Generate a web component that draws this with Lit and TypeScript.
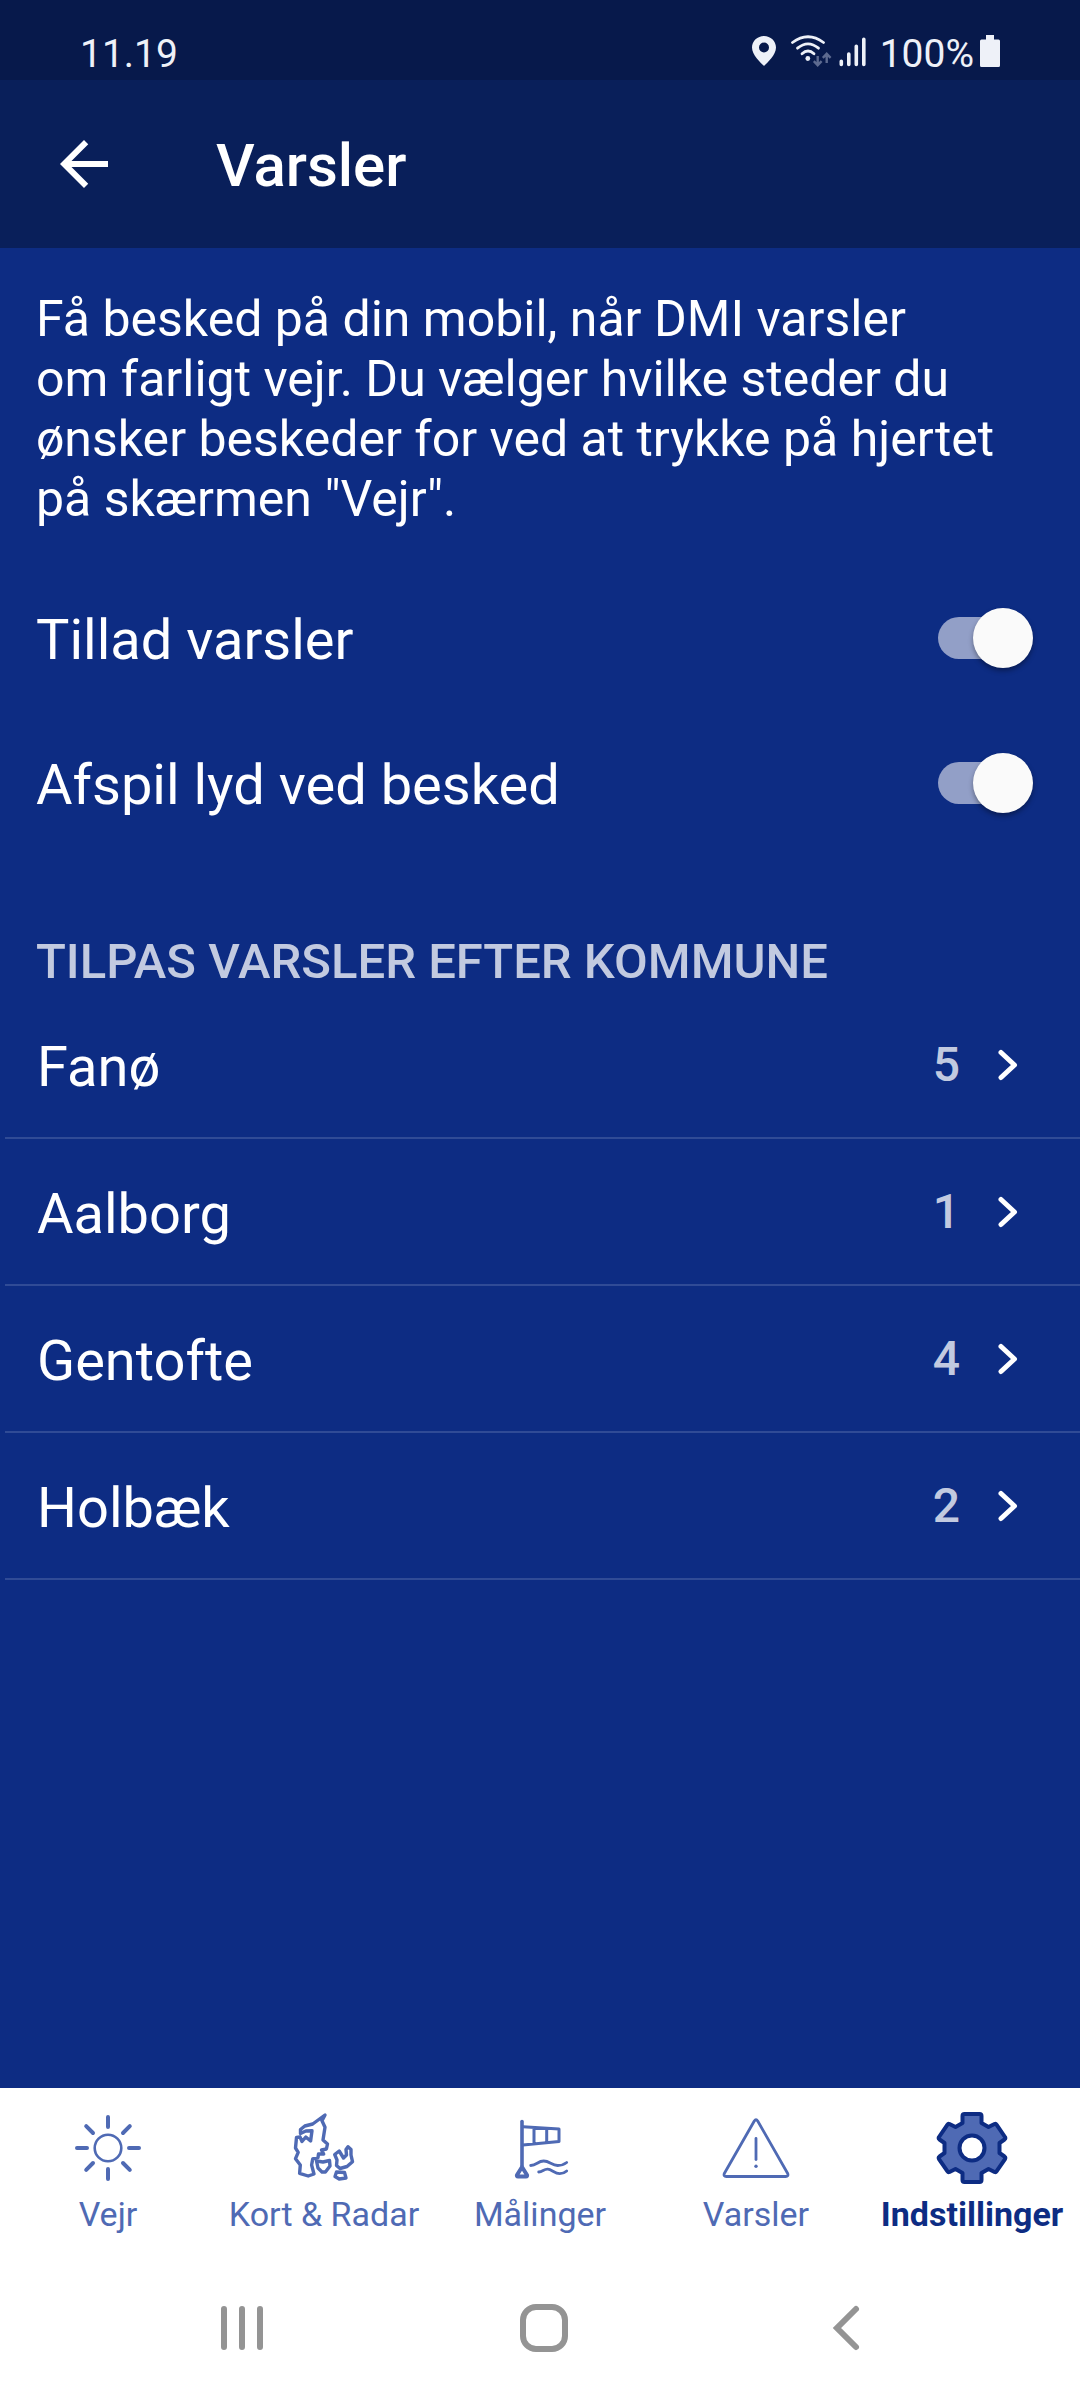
import { LitElement, html, css, svg } from "lit";
import { customElement, state } from "lit/decorators.js";

interface Municipality {
  name: string;
  count: number;
}

const icons = {
  back: svg`<svg viewBox="0 0 24 24" width="72" height="72" aria-hidden="true"><path fill="currentColor" d="M20 11H7.83l5.59-5.59L12 4l-8 8 8 8 1.41-1.41L7.83 13H20z"/></svg>`,
  pin: svg`<svg viewBox="0 0 24 32" width="24" height="32" aria-hidden="true"><path fill="currentColor" fill-rule="evenodd" d="M12 1C5.500 1 0 6 0 12.500 0 20 8.500 27.500 12 31c3.500-3.500 12-11 12-18.500C24 6 18.500 1 12 1zM12 7.500a5 5 0 1 1 0 10 5 5 0 0 1 0-10z"/></svg>`,
  wifi: svg`<svg viewBox="0 0 42 32" width="42" height="32" aria-hidden="true"><g fill="none" stroke="currentColor" stroke-width="2.800" stroke-linecap="round"><path d="M2.500 7.500Q18-4 33.500 7.500"/><path d="M7.500 13.200Q18 4.500 28.500 13.200"/><path d="M12 18.800Q18 13 24 18.800"/></g><circle cx="17.800" cy="23.500" r="2.400" fill="currentColor"/><g fill="none" stroke="#5d6a90" stroke-width="2.400"><path d="M27.700 21v9M23.800 26.200l3.900 4 3.900-4M36.700 28v-9M32.800 22.800l3.900-4 3.900 4"/></g></svg>`,
  signal: svg`<svg viewBox="0 0 28 32" width="28" height="32" aria-hidden="true"><g stroke="currentColor" stroke-width="3.600" stroke-linecap="round"><path d="M2.300 26.300v3.200M9.800 19v10.500M17.300 11.300v18.200M24.800 4.300v25.200"/></g></svg>`,
  battery: svg`<svg viewBox="0 0 20 32" width="20" height="32" aria-hidden="true"><path fill="currentColor" d="M6 0h8v4.500h4.500A1.500 1.500 0 0 1 20 6v24.500a1.500 1.500 0 0 1-1.500 1.500h-17A1.500 1.500 0 0 1 0 30.500V6a1.500 1.500 0 0 1 1.500-1.500H6z"/></svg>`,
  chevron: svg`<svg viewBox="0 0 24 36" width="24" height="36" aria-hidden="true"><path d="M5 5.500L18.500 18 5 30.500" fill="none" stroke="currentColor" stroke-width="5" stroke-linecap="round" stroke-linejoin="round"/></svg>`,
  sun: svg`<svg viewBox="0 0 72 76" width="72" height="76" aria-hidden="true"><g fill="none" stroke="currentColor" stroke-linecap="round"><circle cx="36" cy="38" r="13.300" stroke-width="2.600"/><path stroke-width="4" d="M36 7v10M36 59v10M5 38h10M57 38h10M14.200 16.200l6.800 6.800M51 53l6.800 6.800M57.800 16.200l-6.800 6.800M21 53l-6.800 6.800"/></g></svg>`,
  map: svg`<svg viewBox="0 0 72 76" width="72" height="76" aria-hidden="true"><g fill="none" stroke="currentColor" stroke-width="3.400" stroke-linejoin="round" stroke-linecap="round"><path d="M37 5L34 10.700 37 17.300 35 30 39.500 34 38.400 39 33.500 40 35.700 44 30.500 44 30 47.500 24.700 49 23.600 55 26 64 20.200 66 11.600 63.300 12.300 55 7.500 48.700 10.200 42.300 7.500 38 8.500 27.500 12 27 14 31.500 17.800 27 22.600 31 24 20.700 17.800 21 12.500 23.500 12.500 19.500 16.800 16 24.700 14z"/><path d="M28.500 51L35 52 41.500 50.500 42 56 37.400 62 34 62 30 58z"/><path d="M46.700 44.500L51.200 41 55.500 48 58.500 45 58 39.500 60 36.700 63 39.500 63 45 64.500 51.700 59 56.500 52 58.500 48.500 55.500 49 50z"/><path d="M48.500 62L56.500 62.500 58 68 51.200 69 47 66.500z"/></g></svg>`,
  windsock: svg`<svg viewBox="0 0 72 76" width="72" height="76" aria-hidden="true"><g fill="none" stroke="currentColor" stroke-width="3" stroke-linecap="round" stroke-linejoin="round"><path stroke-width="3.600" d="M18 11.500v44"/><path d="M19 16.700l36 2.300v12.500L19 35M30 18v16M42.700 18.500v14"/><path stroke-width="4" d="M18 57l-5 8q-.5 1.500 1 1.500h8q1.500 0 1-1.500z"/><path stroke-width="2.800" d="M26.700 55.500c6 0 7-4.500 13-4.500s8 4.500 14 4.500q5 0 9-3M34.700 62c4 0 5-3 9-2.800s7 4.500 12 4.500q4 0 7-2.700"/></g></svg>`,
  warning: svg`<svg viewBox="0 0 72 76" width="72" height="76" aria-hidden="true"><g fill="none" stroke="currentColor" stroke-width="2.800" stroke-linecap="round" stroke-linejoin="round"><path d="M34.300 11q1.700-2.500 3.400 0l30 52.500q1 3-2 3H6.300q-3 0-2-3z"/><path d="M36 28.500v21"/></g><circle cx="36" cy="56.300" r="1.700" fill="currentColor"/></svg>`,
  gear: svg`<svg viewBox="0 0 72 76" width="72" height="76" aria-hidden="true"><path fill="#4f6ab4" stroke="#0d2c83" stroke-width="4" stroke-linejoin="round" fill-rule="evenodd" d="M26.500 13V6q0-2 2-2h15q2 0 2 2v7l7 4 6-3q1.300-.5 2.200.8L69 27q.8 1.500-.5 2.500L63.500 33v10l5 3.500q1.300 1 .5 2.500l-8.300 12.200q-.9 1.300-2.200.8l-6-3-7 4v7q0 2-2 2h-15q-2 0-2-2v-7l-7-4-6 3q-1.300.5-2.200-.8L3 49q-.8-1.500.5-2.500l5-3.500V33l-5-3.500Q2.200 28.500 3 27l8.300-12.200q.9-1.300 2.200-.8l6 3zM36 25.500a12.500 12.500 0 1 0 0 25 12.500 12.500 0 0 0 0-25z"/></svg>`,
  recents: svg`<svg viewBox="0 0 60 60" width="60" height="60" aria-hidden="true"><path d="M12 11v38M30 11v38M48 11v38" stroke="currentColor" stroke-width="6" stroke-linecap="round"/></svg>`,
  home: svg`<svg viewBox="0 0 60 60" width="60" height="60" aria-hidden="true"><rect x="9" y="9" width="42" height="42" rx="13" fill="none" stroke="currentColor" stroke-width="6"/></svg>`,
  sysBack: svg`<svg viewBox="0 0 60 60" width="60" height="60" aria-hidden="true"><path d="M40 11L21 30l19 19" fill="none" stroke="currentColor" stroke-width="6" stroke-linecap="round" stroke-linejoin="miter"/></svg>`,
};

@customElement("app-root")
export class AppRoot extends LitElement {
  static styles = css`
    :host {
      display: flex;
      flex-direction: column;
      min-height: 100vh;
      background: #0d2c83;
      color: #fff;
      font-family: Roboto, "Liberation Sans", sans-serif;
    }
    * { box-sizing: border-box; }
    svg { display: block; flex: none; }
    button { font: inherit; color: inherit; background: none; border: 0; padding: 0; cursor: pointer; }
    a { color: inherit; text-decoration: none; }
    .status {
      display: flex;
      align-items: center;
      justify-content: space-between;
      padding: 30px 80px 2px;
      background: #07194b;
      color: #eef1f8;
      font-size: 39px;
      line-height: 48px;
    }
    .indicators { display: flex; align-items: center; }
    .indicators svg { margin-bottom: 6px; }
    .location { margin-right: 14px; }
    .wifi { margin-right: 7px; }
    .signal { margin-right: 13px; }
    .percent { margin-right: 6px; }
    .header {
      display: flex;
      align-items: center;
      gap: 96px;
      padding: 46px 48px;
      background: #091f5a;
    }
    .title { margin: 0; padding-top: 4px; font-size: 60px; line-height: 72px; font-weight: 500; }
    .content { flex: 1; padding-top: 41px; }
    .intro { margin: 0 36px 36px; font-size: 50px; line-height: 60px; }
    .toggle {
      display: flex;
      align-items: center;
      justify-content: space-between;
      padding: 0 36px;
      min-height: 145px;
      font-size: 56px;
      line-height: 64px;
    }
    .toggle label, .name { padding-top: 4px; }
    .switch {
      appearance: none;
      display: grid;
      align-items: center;
      width: 95px;
      height: 60px;
      margin: 0 11px 0 0;
      cursor: pointer;
    }
    .switch::before, .switch::after { content: ""; grid-area: 1 / 1; }
    .switch::before { height: 42px; margin-right: 8px; border-radius: 21px; background: #929fc7; }
    .switch::after {
      width: 60px;
      height: 60px;
      border-radius: 50%;
      background: #fafafa;
      box-shadow: 0 3px 5px rgba(0, 0, 0, 0.35);
    }
    .switch:checked::after { justify-self: end; }
    .section {
      margin: 79px 36px 2px;
      font-size: 49px;
      line-height: 56px;
      font-weight: 500;
      text-transform: uppercase;
      color: #c2cae0;
    }
    .list { list-style: none; margin: 0; padding: 0 0 0 5px; }
    .item { border-bottom: 2px solid #304b96; }
    .row {
      display: flex;
      align-items: center;
      min-height: 145px;
      padding: 0 60px 0 32px;
      font-size: 56px;
      line-height: 64px;
    }
    .name { flex: 1; }
    .count { margin-right: 36px; font-size: 48px; font-weight: 500; color: #c2cae0; }
    .tabs { display: grid; grid-template-columns: repeat(5, 1fr); background: #fff; color: #4f6ab4; padding: 22px 0 24px; }
    .tab {
      display: flex;
      flex-direction: column;
      align-items: center;
      gap: 8px;
      font-size: 34px;
      line-height: 40px;
      white-space: nowrap;
    }
    .active { color: #0d2c83; font-weight: 700; }
    .system {
      display: flex;
      justify-content: space-around;
      padding: 40px 83px 42px 91px;
      background: #fff;
      color: #949494;
    }
  `;

  @state() private municipalities: Municipality[] = [
    { name: "Fanø", count: 5 },
    { name: "Aalborg", count: 1 },
    { name: "Gentofte", count: 4 },
    { name: "Holbæk", count: 2 },
  ];

  private tabs = [
    { label: "Vejr", icon: icons.sun },
    { label: "Kort & Radar", icon: icons.map },
    { label: "Målinger", icon: icons.windsock },
    { label: "Varsler", icon: icons.warning },
    { label: "Indstillinger", icon: icons.gear, active: true },
  ];

  render() {
    return html`
      <div class="status">
        <span>11.19</span>
        <div class="indicators">
          <span class="location">${icons.pin}</span>
          <span class="wifi">${icons.wifi}</span>
          <span class="signal">${icons.signal}</span>
          <span class="percent">100%</span>
          ${icons.battery}
        </div>
      </div>
      <header class="header">
        <button type="button" aria-label="Tilbage">${icons.back}</button>
        <h1 class="title">Varsler</h1>
      </header>
      <main class="content">
        <p class="intro">
          Få besked på din mobil, når DMI varsler<br />om farligt vejr. Du vælger hvilke steder du<br />ønsker beskeder for ved at trykke på hjertet<br />på skærmen "Vejr".
        </p>
        <div class="toggle">
          <label for="allow">Tillad varsler</label>
          <input class="switch" id="allow" type="checkbox" role="switch" checked />
        </div>
        <div class="toggle">
          <label for="sound">Afspil lyd ved besked</label>
          <input class="switch" id="sound" type="checkbox" role="switch" checked />
        </div>
        <h2 class="section">Tilpas varsler efter kommune</h2>
        <ul class="list">
          ${this.municipalities.map(
            (m) => html`
              <li class="item">
                <a class="row" href="#">
                  <span class="name">${m.name}</span>
                  <span class="count">${m.count}</span>
                  ${icons.chevron}
                </a>
              </li>
            `
          )}
        </ul>
      </main>
      <nav class="tabs">
        ${this.tabs.map(
          (t) => html`<a class="tab ${t.active ? "active" : ""}" href="#">${t.icon}<span>${t.label}</span></a>`
        )}
      </nav>
      <div class="system">
        <button type="button" aria-label="Seneste apps">${icons.recents}</button>
        <button type="button" aria-label="Hjem">${icons.home}</button>
        <button type="button" aria-label="Forrige">${icons.sysBack}</button>
      </div>
    `;
  }
}
